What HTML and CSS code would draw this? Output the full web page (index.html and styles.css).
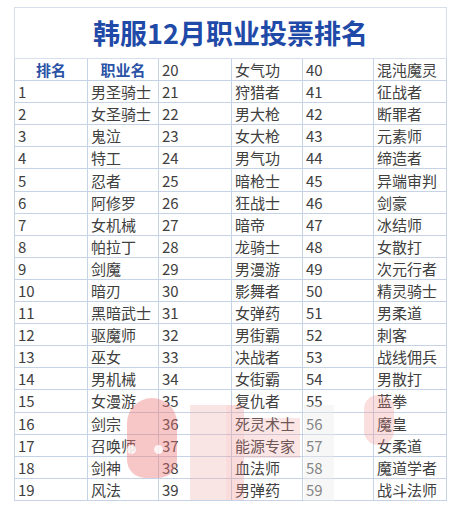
FILE: index.html
```html
<!DOCTYPE html>
<html lang="zh-CN">
<head>
<meta charset="utf-8">
<title>韩服12月职业投票排名</title>
<link rel="stylesheet" href="styles.css">
</head>
<body>
<div class="page">
<table class="rank">
<colgroup>
<col class="c1"><col class="c2"><col class="c3"><col class="c4"><col class="c5"><col class="c6">
</colgroup>
<tbody>
<tr class="title-row"><td colspan="6" class="title">韩服12月职业投票排名</td></tr>
<tr><th>排名</th><th>职业名</th><td>20</td><td>女气功</td><td>40</td><td>混沌魔灵</td></tr>
<tr><td>1</td><td>男圣骑士</td><td>21</td><td>狩猎者</td><td>41</td><td>征战者</td></tr>
<tr><td>2</td><td>女圣骑士</td><td>22</td><td>男大枪</td><td>42</td><td>断罪者</td></tr>
<tr><td>3</td><td>鬼泣</td><td>23</td><td>女大枪</td><td>43</td><td>元素师</td></tr>
<tr><td>4</td><td>特工</td><td>24</td><td>男气功</td><td>44</td><td>缔造者</td></tr>
<tr><td>5</td><td>忍者</td><td>25</td><td>暗枪士</td><td>45</td><td>异端审判</td></tr>
<tr><td>6</td><td>阿修罗</td><td>26</td><td>狂战士</td><td>46</td><td>剑豪</td></tr>
<tr><td>7</td><td>女机械</td><td>27</td><td>暗帝</td><td>47</td><td>冰结师</td></tr>
<tr><td>8</td><td>帕拉丁</td><td>28</td><td>龙骑士</td><td>48</td><td>女散打</td></tr>
<tr><td>9</td><td>剑魔</td><td>29</td><td>男漫游</td><td>49</td><td>次元行者</td></tr>
<tr><td>10</td><td>暗刃</td><td>30</td><td>影舞者</td><td>50</td><td>精灵骑士</td></tr>
<tr><td>11</td><td>黑暗武士</td><td>31</td><td>女弹药</td><td>51</td><td>男柔道</td></tr>
<tr><td>12</td><td>驱魔师</td><td>32</td><td>男街霸</td><td>52</td><td>刺客</td></tr>
<tr><td>13</td><td>巫女</td><td>33</td><td>决战者</td><td>53</td><td>战线佣兵</td></tr>
<tr><td>14</td><td>男机械</td><td>34</td><td>女街霸</td><td>54</td><td>男散打</td></tr>
<tr><td>15</td><td>女漫游</td><td>35</td><td>复仇者</td><td>55</td><td>蓝拳</td></tr>
<tr><td>16</td><td>剑宗</td><td>36</td><td>死灵术士</td><td>56</td><td>魔皇</td></tr>
<tr><td>17</td><td>召唤师</td><td>37</td><td>能源专家</td><td>57</td><td>女柔道</td></tr>
<tr><td>18</td><td>剑神</td><td>38</td><td>血法师</td><td>58</td><td>魔道学者</td></tr>
<tr><td>19</td><td>风法</td><td>39</td><td>男弹药</td><td>59</td><td>战斗法师</td></tr>
</tbody>
</table>
<div class="watermark" aria-hidden="true">
  <div class="wm-blob"><span class="eye e1"></span><span class="eye e2"></span></div>
  <div class="wm-bar wm-b1"></div>
  <div class="wm-bar wm-b2"></div>
  <div class="wm-band"></div>
  <div class="wm-gray"></div>
  <div class="wm-d"></div>
</div>
</div>
</body>
</html>
```
FILE: styles.css
```css
html, body {
  margin: 0;
  padding: 0;
  background: #ffffff;
}
.page {
  position: relative;
  padding: 7px 6px 0 14px;
  width: 432px;
}
.rank {
  border-collapse: collapse;
  table-layout: fixed;
  width: 432px;
  font-family: "Noto Sans CJK SC", "Noto Sans", sans-serif;
  font-size: 15px;
  color: #404040;
}
.c1 { width: 73px; }
.c2 { width: 71px; }
.c3 { width: 73px; }
.c4 { width: 71px; }
.c5 { width: 71px; }
.c6 { width: 73px; }
.rank td, .rank th {
  border: 1px solid #c6d3e6;
  height: 21px;
  padding: 0 0 0 3px;
  line-height: 21px;
  text-align: left;
  white-space: nowrap;
  overflow: hidden;
  font-weight: normal;
}
.rank tr:nth-child(n+2) td, .rank tr:nth-child(n+2) th {
  height: 21.1px;
}
.rank th {
  text-align: center;
  padding: 0;
  font-weight: bold;
  color: #2a52a6;
}
.rank td.title {
  height: 50px;
  line-height: 50px;
  padding: 0;
  text-align: center;
  font-size: 27px;
  font-weight: bold;
  color: #1f4aa8;
  border-color: #d6dfeb;
}
.watermark {
  position: absolute;
  left: 0;
  top: 0;
  width: 452px;
  height: 515px;
  pointer-events: none;
}
.wm-blob {
  position: absolute;
  left: 127px;
  top: 398px;
  width: 50px;
  height: 80px;
  background: rgba(236, 120, 120, 0.42);
  border-radius: 30px 30px 22px 22px;
}
.eye {
  position: absolute;
  width: 9px;
  height: 9px;
  border-radius: 50%;
  background: rgba(255, 255, 255, 0.8);
  top: 47px;
}
.e1 { left: 0px; }
.e2 { left: 27px; }
.wm-bar {
  position: absolute;
  background: rgba(240, 170, 170, 0.3);
}
.wm-b1 {
  left: 190px;
  top: 405px;
  width: 36px;
  height: 95px;
}
.wm-b2 {
  left: 226px;
  top: 405px;
  width: 18px;
  height: 95px;
  background: rgba(240, 140, 140, 0.3);
}
.wm-band {
  position: absolute;
  left: 244px;
  top: 418px;
  width: 56px;
  height: 40px;
  background: rgba(240, 150, 150, 0.25);
}
.wm-gray {
  position: absolute;
  left: 304px;
  top: 405px;
  width: 30px;
  height: 105px;
  background: rgba(235, 235, 235, 0.4);
}
.wm-d {
  position: absolute;
  left: 364px;
  top: 395px;
  width: 30px;
  height: 50px;
  border-radius: 14px;
  background: rgba(240, 140, 140, 0.28);
}
```
